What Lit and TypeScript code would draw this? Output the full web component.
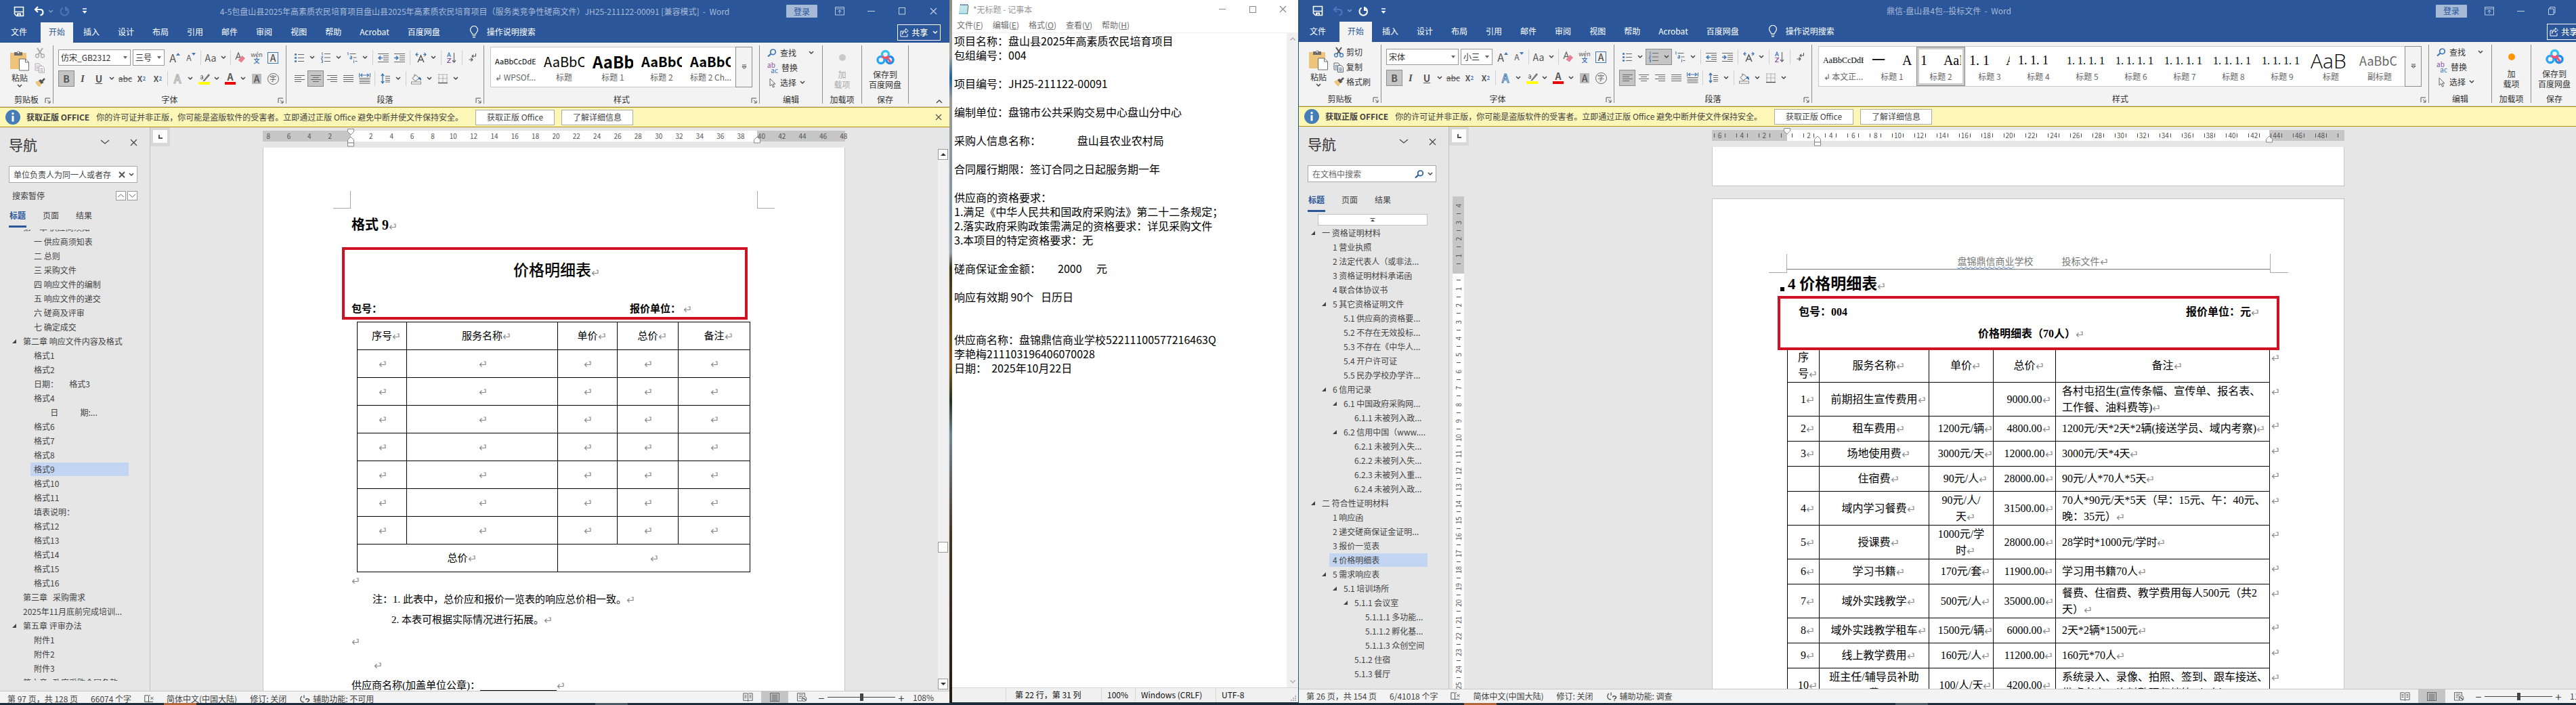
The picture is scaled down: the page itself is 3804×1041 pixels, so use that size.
import { LitElement, html, svg, css, nothing } from "lit";
import { customElement, property } from "lit/decorators.js";
import { classMap } from "lit/directives/class-map.js";

interface TreeRow { level: number; text: string; open?: boolean; active?: boolean }
interface StyleCell { sample: string; name: string; kind: string; active?: boolean }
interface WordData {
  title: string;
  maximized: boolean;
  font: string;
  size: string;
  query: string;
  rows: TreeRow[];
  styles: StyleCell[];
  status: string[];
  access: string;
  zoom: number;
  align: string;
}

const row = (level: number, text: string, open = false, active = false): TreeRow => ({ level, text, open, active });

const leftWord: WordData = {
  title: "4-5包盘山县2025年高素质农民培育项目盘山县2025年高素质农民培育项目（服务类竞争性磋商文件）JH25-211122-00091 [兼容模式]  -  Word",
  maximized: false,
  font: "仿宋_GB2312",
  size: "三号",
  query: "单位负责人为同一人或者存",
  rows: [
    row(1, "第一章 供应商须知"),
    row(2, "一 供应商须知表"), row(2, "二 总则"), row(2, "三 采购文件"), row(2, "四 响应文件的编制"),
    row(2, "五 响应文件的递交"), row(2, "六 磋商及评审"), row(2, "七 确定成交"),
    row(1, "第二章 响应文件内容及格式", true),
    row(2, "格式1"), row(2, "格式2"), row(2, "日期：      格式3"), row(2, "格式4"),
    row(2, "         日            期:..."), row(2, "格式6"), row(2, "格式7"), row(2, "格式8"),
    row(2, "格式9", false, true), row(2, "格式10"), row(2, "格式11"), row(2, "填表说明："),
    row(2, "格式12"), row(2, "格式13"), row(2, "格式14"), row(2, "格式15"), row(2, "格式16"),
    row(1, "第三章   采购需求"), row(1, "2025年11月底前完成培训..."),
    row(1, "第五章 评审办法", true), row(2, "附件1"), row(2, "附件2"), row(2, "附件3"),
    row(1, "第六章   政府采购合同条款"),
  ],
  styles: [
    { sample: "AaBbCcDdE", name: "↲ WPSOf...", kind: "s11" },
    { sample: "AaBbC", name: "标题", kind: "s20" },
    { sample: "AaBb", name: "标题 1", kind: "s24 b" },
    { sample: "AaBbC", name: "标题 2", kind: "s20 b" },
    { sample: "AaBbC", name: "标题 2 Ch...", kind: "s20 b" },
  ],
  status: ["第 97 页，共 128 页", "66074 个字"],
  access: "辅助功能: 不可用",
  zoom: 108,
  align: "center",
};

const rightWord: WordData = {
  title: "鼎信-盘山县4包--投标文件  -  Word",
  maximized: true,
  font: "宋体",
  size: "小三",
  query: "",
  rows: [
    row(1, "一 资格证明材料", true), row(2, "1 营业执照"), row(2, "2 法定代表人（或非法..."),
    row(2, "3 资格证明材料承诺函"), row(2, "4 联合体协议书"), row(2, "5 其它资格证明文件", true),
    row(3, "5.1 供应商的资格要..."), row(3, "5.2 不存在无效投标..."), row(3, "5.3 不存在《中华人..."),
    row(3, "5.4 开户许可证"), row(3, "5.5 民办学校办学许..."), row(2, "6 信用记录", true),
    row(3, "6.1 中国政府采购网...", true), row(4, "6.1.1 未被列入政..."),
    row(3, "6.2 信用中国（www....", true), row(4, "6.2.1 未被列入失..."), row(4, "6.2.2 未被列入失..."),
    row(4, "6.2.3 未被列入重..."), row(4, "6.2.4 未被列入政..."), row(1, "二 符合性证明材料", true),
    row(2, "1 响应函"), row(2, "2 递交磋商保证金证明..."), row(2, "3 报价一览表"),
    row(2, "4 价格明细表", false, true), row(2, "5 需求响应表", true), row(3, "5.1 培训场所", true),
    row(4, "5.1.1 会议室", true), row(5, "5.1.1.1 多功能..."), row(5, "5.1.1.2 孵化基..."),
    row(5, "5.1.1.3 众创空间"), row(4, "5.1.2 住宿"), row(4, "5.1.3 餐厅"),
  ],
  styles: [
    { sample: "AaBbCcDdE", name: "↲ 本文正...", kind: "song s12" },
    { sample: "一     A", name: "标题 1", kind: "song s20" },
    { sample: "1     AaI", name: "标题 2", kind: "song s20", active: true },
    { sample: "1. 1     A", name: "标题 3", kind: "song s20" },
    { sample: "1. 1. 1", name: "标题 4", kind: "song s18" },
    { sample: "1. 1. 1. 1", name: "标题 5", kind: "song s16" },
    { sample: "1. 1. 1. 1", name: "标题 6", kind: "song s16" },
    { sample: "1. 1. 1. 1", name: "标题 7", kind: "song s16" },
    { sample: "1. 1. 1. 1", name: "标题 8", kind: "song s16" },
    { sample: "1. 1. 1. 1", name: "标题 9", kind: "song s16" },
    { sample: "AaB", name: "标题", kind: "s30 thin" },
    { sample: "AaBbC", name: "副标题", kind: "s18 soft" },
  ],
  status: ["第 26 页，共 154 页", "6/41018 个字"],
  access: "辅助功能: 调查",
  zoom: 110,
  align: "left",
};

const noteText = `项目名称：盘山县2025年高素质农民培育项目
包组编号：004

项目编号：JH25-211122-00091

编制单位：盘锦市公共采购交易中心盘山分中心

采购人信息名称：               盘山县农业农村局

合同履行期限：签订合同之日起服务期一年

供应商的资格要求：
1.满足《中华人民共和国政府采购法》第二十二条规定；
2.落实政府采购政策需满足的资格要求：详见采购文件
3.本项目的特定资格要求：无

磋商保证金金额：       2000      元

响应有效期 90个   日历日


供应商名称：盘锦鼎信商业学校52211100577216463Q
李艳梅211103196406070028
日期：  2025年10月22日`;

/* ---------- icons ---------- */
const ico = (w: number, h: number, body: unknown) =>
  html`<svg class="ico" width=${w} height=${h} viewBox="0 0 ${w} ${h}" fill="none" aria-hidden="true">${body}</svg>`;
const chev = () => ico(8, 6, svg`<path d="M1 1l3 3 3-3" stroke="#444" stroke-width="1.5"/>`);
const bigChev = () => ico(14, 8, svg`<path d="M1 1l6 5 6-5" stroke="#444" stroke-width="1.2"/>`);
const cross = (color = "#444", n = 12) =>
  ico(n, n, svg`<path d="M1 1L${n - 1} ${n - 1}M${n - 1} 1L1 ${n - 1}" stroke=${color} stroke-width="1.2"/>`);
const save = () => ico(16, 16, svg`<path d="M1.5 1.5h13v13h-10l-3-3z" stroke="#fff" stroke-width="1.6"/><path d="M2 8.5h12" stroke="#fff" stroke-width="1.4"/><path d="M5 10.500h6v4H9.500v-2H7v2H5z" fill="#fff"/>`);
const undo = (c: string) => ico(16, 15, svg`<path d="M6 1L2 5l4 4M2.500 5H9c3 0 4.500 1.800 4.500 4.200S12 13 9.500 13.500" stroke=${c} stroke-width="2.200"/>`);
const redo = (c: string) => ico(15, 15, svg`<path d="M4.500 2.500C2 4 1.500 6 1.500 8a5.700 5.700 0 0 0 11.500 0c0-2.500-1.300-4.500-3.500-5.500M9 1v5h4.500" stroke=${c} stroke-width="2"/>`);
const customize = () => ico(8, 9, svg`<path d="M1 1h6" stroke="#fff" stroke-width="1.500"/><path d="M.5 4h7L4 8z" fill="#fff"/>`);
const ribbonOpt = () => ico(15, 13, svg`<rect x=".5" y=".5" width="13" height="11.500" stroke="#b8c7df"/><path d="M.5 3h13M7 10V5M4.500 7.300L7 5l2.500 2.300" stroke="#b8c7df"/>`);
const bulb = () => ico(14, 18, svg`<path d="M4.500 12.500c0-2-3-3-3-6.500a5.500 5.500 0 0 1 11 0c0 3.500-3 4.500-3 6.500zM4.500 14.500h5M5 16.800h4" stroke="#fff" stroke-width="1.200"/>`);
const share = () => ico(13, 14, svg`<path d="M4 5H1v8h10V9M3.500 10c.3-3 2-4.500 5-4.500V8L12 4.500 8.500 1v2.500C5 3.500 3.500 6.500 3.500 10z" stroke="#fff"/>`);
const paste = () => ico(30, 31, svg`<path d="M1 4h24v24H1z" fill="#eec47b"/><path d="M7 3h4a2.500 2.500 0 0 1 4.500 0H19v5H7z" fill="#6d6d6d"/><circle cx="13" cy="3.500" r="1.200" fill="#f3f3f3"/><path d="M14.500 13h9l5 5v12h-14z" fill="#fff" stroke="#6d6d6d"/><path d="M23.500 13v5h5" stroke="#6d6d6d"/>`);
const cut = (on: boolean) => { const a = on ? "#555" : "#aaa"; const b = on ? "#3f78b5" : "#aaa"; return ico(16, 16, svg`<path d="M4 1l6.500 9.500M12 1L5.500 10.500" stroke=${a} stroke-width="2"/><circle cx="4" cy="12.500" r="2.500" stroke=${b} stroke-width="1.300"/><circle cx="12" cy="12.500" r="2.500" stroke=${b} stroke-width="1.300"/>`); };
const copy = (on: boolean) => { const a = on ? "#666" : "#b1acb8"; const b = on ? "#3f78b5" : "#b1acb8"; return ico(16, 15, svg`<path d="M1 1h6l2 2v8H1z" stroke=${a}/><path d="M6.500 4.500h5l3 3v7h-8z" fill="#f3f3f3" stroke=${a}/><path d="M2.500 4.500h3M2.500 6.500h3M2.500 8.500h3M8.500 8.500h4M8.500 10.500h4M8.500 12.500h4" stroke=${b}/>`); };
const brush = () => ico(16, 14, svg`<path d="M1 6l5-2 4 5-2 4.500C5 13 3 10 1 6z" fill="#eec47b"/><path d="M6 4l3-2 4.500 5L10 9z" fill="#555"/><path d="M11 5l4-4" stroke="#555" stroke-width="2.500"/>`);
const launcher = () => ico(9, 9, svg`<path d="M1 8V1h7M4 4l4 4M8 4.500V8H4.500" stroke="#555"/>`);
const eraser = () => ico(16, 18, svg`<path d="M1 12L5 2l4 10M2.500 8.500h5" stroke="#666" stroke-width="1.300"/><path d="M4.500 13l6-7 4.500 4-5.500 6.500z" fill="#ea7e92"/>`);
const lines = (ws: number[], xs: number[] = [], c = "#666") => svg`${ws.map((w, i) => svg`<path d="M${xs[i] ?? 0} ${i * 3 + 1}.5h${w}" stroke=${c}/>`)}`;
const alignIcon = (k: string) => {
  const m: Record<string, [number[], number[]]> = {
    left: [[15, 10, 15, 10], []], center: [[15, 9, 15, 9], [0, 3, 0, 3]], right: [[15, 10, 15, 10], [0, 5, 0, 5]], justify: [[15, 15, 15, 15], []],
  };
  return ico(15, 13, lines(m[k][0], m[k][1]));
};
const distribute = () => ico(17, 17, svg`<path d="M.5 0v6M16.500 0v6M2 3h13M5 .8L2.500 3 5 5.200M12 .8L14.500 3 12 5.200" stroke="#3f78b5" stroke-width="1.200"/><path d="M.5 7.500h16M.5 10h16M.5 12.500h16M.5 15h16" stroke="#666"/>`);
const bullets = () => ico(15, 15, svg`<path d="M0 2.500h3M0 7.500h3M0 12.500h3" stroke="#3f78b5" stroke-width="2.500"/><path d="M5 2.500h9M5 7.500h9M5 12.500h9" stroke="#666"/>`);
const numbers = () => ico(15, 16, svg`<path d="M1 1.500L2 .5V5M.5 6.500h2v2h-2v2h2M.5 12h2v3.500h-2M1 13.700h1.500" stroke="#3f78b5" stroke-width=".9"/><path d="M5 2.500h9M5 8h9M5 13.500h9" stroke="#666"/>`);
const multi = () => ico(16, 16, svg`<path d="M1 1l1-.5V4.500M5 6h2.500v4H5V8h2.500M10.500 12.500V16M10.500 11v.8" stroke="#3f78b5"/><path d="M4.500 2.500h9M9.500 8h5M12.500 13.500h3" stroke="#666"/>`);
const indent = (out: boolean) => ico(16, 13, svg`<path d="M0 .5h16M8 3.500h8M8 6.500h8M8 9.500h8M0 12.500h16" stroke="#666"/>${out ? svg`<path d="M7 6.500H1.500M4 3.800L1.200 6.500 4 9.200" stroke="#3f78b5" stroke-width="1.600"/>` : svg`<path d="M0 6.500h5.500M3 3.800l2.800 2.700L3 9.200" stroke="#3f78b5" stroke-width="1.600"/>`}`);
const asian = () => ico(17, 16, svg`<path d="M4 15L8.500 5 13 15M5.500 11.500h6" stroke="#555" stroke-width="1.500"/><path d="M3.500 1L1 3.500 3.500 6M1 3.500h4M13.500 1L16 3.500 13.500 6M16 3.500h-4" stroke="#3f78b5" stroke-width="1.200"/>`);
const sort = () => ico(14, 17, svg`<path d="M.5 7L3 .8 5.500 7M1.300 5h3.400" stroke="#3f78b5" stroke-width="1.100"/><path d="M.5 9.500h5L.5 15.500h5" stroke="#8a50a8" stroke-width="1.200"/><path d="M10.500 1v13M8 12l2.500 3 2.500-3" stroke="#666" stroke-width="1.200"/>`);
const marks = () => ico(12, 14, svg`<path d="M10.500 1v4H5M7 3L5 5l2 2M.5 10h5M3.500 7.500L6 10l-2.500 2.500" stroke="#555" stroke-width="1.100"/>`);
const spacing = () => ico(14, 16, svg`<path d="M3 1v14M.8 4L3 1.200 5.200 4M.8 12L3 14.800 5.200 12" stroke="#3f78b5" stroke-width="1.400"/><path d="M7 4.500h7M7 7.500h7M7 10.500h7M7 13h7" stroke="#666"/>`);
const bucket = () => ico(18, 17, svg`<path d="M3 7.500L8 2.500l5 5-5.500 4.500zM6 4V1.500" stroke="#666"/><path d="M13 5.500c3 1 3.500 3 2.500 6-1.500-2-2-2.500-4-3z" fill="#3f78b5"/><rect x="1.500" y="13" width="14" height="3" fill="#fff" stroke="#888"/>`);
const borders = () => ico(14, 15, svg`<path d="M.5 1h13M.5 7h13M1 1v12M7 1v12M13 1v12" stroke="#777" stroke-dasharray="1 1"/><path d="M0 13.500h14" stroke="#444" stroke-width="1.300"/>`);
const pen = () => ico(17, 18, svg`<path d="M3.500 5.500c0-1.500 3-1.500 3 .3v4M6.500 7c-4-.5-4 3 -1.500 2.800.8 0 1.500-.8 1.500-1.300" stroke="#555"/><path d="M7 12L15 2l2 2-8 9H6z" fill="#777"/><rect y="14" width="17" height="4" fill="#ff0"/>`);
const find = (c = "#3f78b5") => ico(14, 12, svg`<circle cx="8.500" cy="4.800" r="3.800" stroke=${c} stroke-width="1.700"/><path d="M5.500 7.500L1 11.500" stroke=${c} stroke-width="2.200"/>`);
const dot = (c: string) => ico(14, 14, svg`<circle cx="7" cy="7" r="5" fill=${c}/>`);
const pan = () => ico(27, 23, svg`<circle cx="7" cy="15.500" r="5" stroke="#2aa5f5" stroke-width="3.400"/><circle cx="20" cy="15.500" r="5" stroke="#1d8df0" stroke-width="3.400"/><circle cx="13.500" cy="7.500" r="5" stroke="#34c2f4" stroke-width="3.400"/><path d="M8.800 9.500c1.500 4 7.500 4 9.400 0" stroke="#f4516c" stroke-width="3.400"/><path d="M16.500 12.500l5 6.500" stroke="#f4516c" stroke-width="3"/>`);
const info = () => ico(22, 22, svg`<circle cx="11" cy="11" r="11" fill="#457db8"/><rect x="9.500" y="9" width="3" height="8.500" fill="#fff"/><circle cx="11" cy="5.800" r="1.700" fill="#fff"/>`);
const book = () => ico(15, 13, svg`<path d="M7.500 1.500L6 .8H.8v10.500H6l1.500 1 1.500-1h5.200V.8H9zM7.500 1.500v10.500" stroke="#666"/><path d="M2.500 3.500h3M2.500 5.500h3M2.500 7.500h3M9.500 3.500h3M9.500 5.500h3M9.500 7.500h3" stroke="#666"/>`);
const pageIcon = () => ico(14, 13, svg`<rect x=".5" y=".5" width="13" height="12" stroke="#666"/><path d="M2.500 3h9M2.500 5h9M2.500 7h9M2.500 9h9M2.500 11h9" stroke="#666"/>`);
const web = () => ico(15, 13, svg`<path d="M8 12H.5V.5h11V5M2.500 3h7M2.500 5.500h5M2.500 8h3" stroke="#666"/><circle cx="10.500" cy="9" r="3.500" stroke="#666"/><path d="M8 8l3 1 2 2.500" stroke="#666" stroke-width="1.500"/>`);
const proof = () => ico(15, 12, svg`<path d="M6.500 1.500L5.500.8H.8v9.500h4.700l1 .7zM6.500 1.500l1-.7H9M7 11l1-.7h5M9.500 3l4 4M13.500 3l-4 4" stroke="#555"/>`);
const access = () => ico(17, 14, svg`<path d="M7 1.500V6M4 3C1.500 5 1 8 3 10.500c1 1 2.500 1.500 4 1" stroke="#555" stroke-width="1.300"/><path d="M9.500 8.500c.5-2.500 5.500-2 5 .5-.3 1.500-2.500 1.200-2.500 3M12 13v1" stroke="#444" stroke-width="1.500"/>`);
const lineMark = () => html`<svg class="pm" width="11" height="9" viewBox="0 0 11 9" fill="none" aria-hidden="true"><path d="M7.500 1H10v4.500H1.500M4.500 2.500l-3 3 3 3" stroke="#888" stroke-width="1.200"/></svg>`;

/* ---------- shared look ---------- */
const base = css`
  * { box-sizing: border-box; }
  button, input, select, textarea { font: inherit; color: inherit; border: 0; padding: 0; margin: 0; background: none; border-radius: 0; outline: 0; }
  button { display: inline-flex; align-items: center; justify-content: center; white-space: pre; }
  a { color: inherit; text-decoration: none; }
  .ico { display: block; flex: none; }
`;

@customElement("word-window")
export class WordWindow extends LitElement {
  @property({ attribute: false }) data!: WordData;

  static styles = [base, css`
    :host { display: flex; flex-direction: column; min-width: 0; min-height: 0; overflow: hidden; background: #e6e6e6;
      font: 12px/16px "Noto Sans CJK SC", "Noto Sans", sans-serif; color: #444; --title: 33px; --status: 18px; --status-pad: 4px; --edge: 20px; }
    :host([maximized]) { --title: 32px; --status: 21px; --status-pad: 0px; --edge: 9px; }
    .title { display: grid; grid-template-columns: 1fr auto 1fr; flex: none; height: var(--title); background: #2b579a; color: #a9bad6; align-items: center; white-space: pre; }
    .qat { display: flex; align-items: center; padding-left: 20px; }
    .qat button { height: 24px; }
    .qat .save { width: 16px; margin-right: 13px; }
    .qat .un { width: 31px; gap: 5px; margin-right: 8px; }
    .qat .re { width: 15px; margin-right: 18px; }
    .ctl { display: flex; justify-content: flex-end; padding-right: 1px; align-items: center; }
    .ctl button { width: 46px; height: 30px; }
    .ctl .login { background: #a6b9d6; color: #2b579a; height: 19px; margin-right: 10px; border-radius: 1px; }
    .tabs { display: flex; flex: none; height: 30px; background: #2b579a; color: #fff; align-items: center; }
    .tabs nav { display: flex; gap: 3px; height: 100%; }
    .tabs a { display: flex; align-items: center; padding: 0 12px 2px; white-space: nowrap; }
    .tabs .file { padding: 0 17px 2px 16px; }
    .tabs .on { background: #f3f3f3; color: #2b579a; }
    .tabs .tell { gap: 12px; margin-left: 16px; }
    .share { margin-left: auto; margin-right: 13px; width: 64px; height: 24px; border: 1px solid #fff; gap: 4px; font-weight: 500; }
    .ribbon { display: flex; flex: none; height: 95px; background: #f3f3f3; border-bottom: 1px solid #d0d0d0; padding-top: 4px; }
    .group { display: flex; flex-direction: column; justify-content: space-between; position: relative; height: 86px; border-right: 1px solid #8c8c8c; flex: none; color: #333; }
    .group > h3 { margin: 0; font-size: 12px; font-weight: 400; line-height: 12px; text-align: center; color: #333; }
    .launch { position: absolute; right: 3px; bottom: 0; width: 9px; height: 9px; }
    .clip { width: 79px; }
    :host([maximized]) .clip { width: 122px; }
    .clip .body { display: flex; padding-left: 14px; gap: 7px; }
    .pastebtn { display: flex; flex-direction: column; width: 30px; line-height: 15px; padding-top: 3px; gap: 2px; }
    .mini { display: flex; flex-direction: column; }
    .mini button { height: 22px; gap: 3px; justify-content: flex-start; }
    .font { width: 344px; }
    .para { width: 292px; }
    .rows { display: flex; flex-direction: column; gap: 7px; padding: 6px 0 0 7px; }
    .r { display: flex; height: 24px; align-items: center; }
    .r > button { width: 24px; height: 24px; color: #555; }
    .r > .split { width: 39px; justify-content: flex-start; gap: 3px; }
    .split > .face { display: flex; justify-content: center; align-items: center; width: 24px; }
    .sel { background: #c5c5c5; box-shadow: inset 0 0 0 1px #8a8a8a; }
    .sep { width: 1px; height: 22px; background: #d0d0d0; margin: 0 2px; flex: none; }
    .para .sep { margin: 0 3px; }
    .combo { display: flex; align-items: center; height: 24px; border: 1px solid #999; background: #fff; padding: 0 4px 0 3px; margin-right: 3px; color: #333; }
    .combo select { appearance: none; flex: 1; min-width: 0; font-size: 12px; height: 20px; }
    .c1 { width: 107px; }
    .c2 { width: 47px; }
    .g16 { font-size: 16px; }
    .b { font-weight: 700; }
    .i { font-style: italic; font-family: "Liberation Serif", serif; font-weight: 700; font-size: 15px; }
    .u { text-decoration: underline; font-weight: 700; font-size: 14px; }
    .s { text-decoration: line-through; }
    sup, sub { font-size: 8px; line-height: 0; color: #3f78b5; font-weight: 700; }
    .box { display: flex; align-items: center; justify-content: center; width: 16px; height: 17px; border: 1px solid #3f78b5; font-weight: 500; font-size: 14px; line-height: 14px; }
    .shade { display: flex; align-items: center; justify-content: center; width: 14px; height: 15px; background: #bbb; font-weight: 500; font-size: 14px; }
    .ring { display: flex; align-items: center; justify-content: center; width: 17px; height: 17px; border: 1px solid #666; border-radius: 50%; font-size: 10px; }
    .wen { display: flex; flex-direction: column; font-size: 9px; line-height: 9px; align-items: center; }
    .wen em { color: #3f78b5; font-style: normal; font-weight: 700; }
    .glow { color: #f3f3f3; -webkit-text-stroke: 1px #aaa; font-size: 17px; font-weight: 500; }
    :host([maximized]) .glow { -webkit-text-stroke-color: #3f78b5; }
    .red { display: flex; flex-direction: column; align-items: center; line-height: 12px; font-size: 14px; font-weight: 700; border-bottom: 4px solid #e00; width: 16px; height: 18px; }
    .styles { flex: 0 0 407px; }
    :host([maximized]) .styles { flex: 0 0 911px; }
    .gallery { display: flex; margin: 2px 10px 0 9px; height: 60px; border: 1px solid #c8c8c8; background: #fff; }
    .cell { display: flex; flex-direction: column; align-items: stretch; width: 72px; height: 58px; padding: 0 6px; overflow: hidden; flex: none; text-align: center; color: #555; justify-content: flex-start; }
    .cell.act { box-shadow: inset 0 0 0 1px #8a8a8a, inset 0 0 0 4px #cdcdc9; }
    .cell .sample { display: block; height: 37px; line-height: 41px; overflow: hidden; color: #000; text-align: left; white-space: pre; }
    .cell .label { display: block; line-height: 14px; color: #666; white-space: pre; }
    .s11 { font-size: 11px; } .s12 { font-size: 12px; } .s14 { font-size: 14px; } .s16 { font-size: 16px; } .s18 { font-size: 18px; } .s20 { font-size: 20px; } .s24 { font-size: 24px; } .s30 { font-size: 30px; }
    .thin { font-family: "Open Sans", "Noto Sans CJK SC", sans-serif; font-weight: 300; }
    .cell .soft { color: #666; }
    .song { font-family: "Liberation Serif", "Noto Sans CJK SC", serif; }
    .more { width: 25px; border: 1px solid #8a8a8a; background: #f3f3f3; margin: -1px -1px -1px auto; }
    .edit { width: 93px; }
    .edit .mini { padding-left: 11px; }
    .edit .mini button { gap: 5px; }
    .edit .mini .chv { margin-left: 13px; }
    .swap { display: flex; flex-direction: column; font-size: 10px; line-height: 8px; width: 16px; height: 17px; color: #8a50a8; text-align: left; }
    .swap em { font-style: normal; color: #3f78b5; text-align: right; }
    .add { width: 58px; }
    .bd { width: 69px; }
    .big { flex-direction: column; line-height: 15px; align-items: center; }
    .big .pic { display: flex; height: 35px; align-items: center; }
    :host(:not([maximized])) .add .big { color: #aaa; }
    .fold { margin-left: auto; align-self: flex-end; width: 30px; height: 16px; }
    .msg { display: flex; flex: none; height: 30px; align-items: center; background: #fcf7b6; border: solid #b98f12; border-width: 1px 0; padding: 0 11px 0 8px; color: #444; white-space: nowrap; }
    .msg strong { margin: 0 10px 0 9px; }
    .msg .act { height: 23px; border: 1px solid #ababab; background: #fff; padding: 0 16px; margin-right: 10px; }
    .msg .first { margin-left: 18px; }
    .msg .x { margin-left: auto; }
    .main { display: flex; flex: 1; min-height: 0; }
    .pane { display: flex; flex-direction: column; width: 222px; flex: none; border-right: 1px solid #c0c0c0; padding: 0 18px 15px 13px; }
    .pane header { display: flex; align-items: center; height: 50px; margin-bottom: 7px; }
    .pane h2 { margin: 0; font-size: 21px; line-height: 24px; font-weight: 400; color: #333; flex: 1; }
    .pane header button { width: 42px; height: 20px; margin-bottom: 6px; }
    .pane header button:last-child { width: 12px; margin-left: 15px; }
    .search { display: flex; align-items: center; flex: none; height: 25px; background: #fff; border: 1px solid #ababab; padding: 0 4px 0 6px; gap: 5px; }
    .search input { flex: 1; min-width: 0; height: 20px; }
    .search input::placeholder { color: #666; opacity: 1; }
    .hits { display: flex; align-items: center; flex: none; height: 20px; margin-top: 9px; padding-left: 5px; gap: 2px; }
    .hits span { flex: 1; }
    .hits button { width: 15px; height: 14px; background: #fff; border: 1px solid #999; }
    .ptabs { display: flex; gap: 23px; flex: none; height: 30px; margin-top: 7px; }
    :host([maximized]) .ptabs { margin-top: 14px; }
    .ptabs a { padding: 4px 1px 0; }
    .ptabs .on { color: #2b579a; font-weight: 700; border-bottom: 3px solid #2b579a; }
    .top { height: 17px; margin: 3px 13px 0 15px; border: 1px solid #c0c0c0; background: #fff; flex: none; }
    .tree { flex: 1; min-height: 0; overflow: hidden; margin-top: 3px; }
    :host([maximized]) .tree { margin-top: 0; }
    .tree ul { list-style: none; margin: -14px 0 0; padding: 0; }
    :host([maximized]) .tree ul { margin-top: 0; }
    .tree li { display: flex; height: 21px; align-items: center; }
    .l2 { padding-left: 16px; } .l3 { padding-left: 32px; } .l4 { padding-left: 48px; } .l5 { padding-left: 64px; }
    .caret { display: flex; width: 16px; justify-content: center; flex: none; }
    .tree a { flex: 1; padding-left: 5px; line-height: 20px; white-space: pre; }
    .tree .act { background: #c2d5f2; margin-right: 13px; }
    .side { display: flex; flex-direction: column; width: 29px; flex: none; }
    .corner { height: 28px; background: #d8d8d8; padding: 4px; flex: none; }
    .corner button { display: flex; width: 21px; height: 19px; background: #fcfcfc; }
    .doc { flex: 1; min-width: 0; overflow: hidden; }
    .scroll { display: flex; flex-direction: column; width: 15px; margin: 32px 2px 2px 0; background: #f0f0f0; flex: none; }
    .scroll button { height: 16px; background: #fff; border: 1px solid #999; }
    .gap1 { flex: 565; } .gap2 { flex: 186; }
    .status { display: flex; flex: none; height: var(--status); padding: var(--status-pad) var(--edge) 0 11px; border-top: 1px solid #c8c8c8; background: #f3f3f3; align-items: center; white-space: nowrap; }
    .status .a { margin-right: 19px; }
    .status .lang { margin: 0 19px 0 18px; }
    .status .acc { margin-left: 3px; }
    .right { display: flex; margin-left: auto; align-items: center; align-self: stretch; margin-top: calc(0px - var(--status-pad)); }
    .right .v { width: 40px; align-self: stretch; }
    .right .v.on { background: #c5c5c5; }
    .sign { width: 18px; font-size: 16px; line-height: 16px; }
    input[type="range"] { appearance: none; width: 100px; height: 13px; margin: 0; background: linear-gradient(#444, #444) center / 100% 1px no-repeat; }
    input[type="range"]::-webkit-slider-thumb { appearance: none; width: 5px; height: 11px; background: #444; border: 0; border-radius: 0; }
    .pct { width: 34px; margin-left: 8px; }
  `];

  private splitBtn(label: string, face: unknown, sel = false) {
    return html`<button class=${classMap({ split: true, sel })} aria-label=${label}><span class="face">${face}</span>${chev()}</button>`;
  }

  private ribbon(d: WordData) {
    const max = d.maximized;
    return html`<section class="ribbon">
      <div class="group clip">
        <div class="body">
          <button class="pastebtn">${paste()}<span>粘贴</span>${chev()}</button>
          <div class="mini">
            <button aria-label="剪切">${cut(max)}${max ? "剪切" : nothing}</button>
            <button aria-label="复制">${copy(max)}${max ? "复制" : nothing}</button>
            <button aria-label="格式刷">${brush()}${max ? "格式刷" : nothing}</button>
          </div>
        </div>
        <h3>剪贴板</h3><button class="launch" aria-label="剪贴板选项">${launcher()}</button>
      </div>
      <div class="group font">
        <div class="rows">
          <div class="r">
            <label class="combo c1"><select aria-label="字体"><option>${d.font}</option></select>${ico(6, 4, svg`<path d="M0 0h6L3 4z" fill="#666"/>`)}</label>
            <label class="combo c2"><select aria-label="字号"><option>${d.size}</option></select>${ico(6, 4, svg`<path d="M0 0h6L3 4z" fill="#666"/>`)}</label>
            <button class="g16" aria-label="增大字号">A${ico(6, 14, svg`<path d="M0 4l3-4 3 4z" fill="#3f78b5"/>`)}</button>
            <button aria-label="减小字号">A${ico(6, 14, svg`<path d="M0 0h6L3 4z" fill="#3f78b5"/>`)}</button>
            <i class="sep"></i>
            ${this.splitBtn("更改大小写", html`<span class="s14">Aa</span>`)}
            <i class="sep"></i>
            <button aria-label="清除格式">${eraser()}</button>
            <button aria-label="拼音指南"><span class="wen">wén<em>文</em></span></button>
            <button aria-label="字符边框"><span class="box">A</span></button>
          </div>
          <div class="r">
            <button class="sel b s14" aria-label="加粗">B</button>
            <button class="i" aria-label="倾斜">I</button>
            ${this.splitBtn("下划线", html`<span class="u">U</span>`)}
            <button class="s" aria-label="删除线">abc</button>
            <button class="b" aria-label="下标">X<sub>2</sub></button>
            <button class="b" aria-label="上标">X<sup>2</sup></button>
            <i class="sep"></i>
            ${this.splitBtn("文本效果", html`<span class="glow">A</span>`)}
            ${this.splitBtn("突出显示", pen())}
            ${this.splitBtn("字体颜色", html`<span class="red">A</span>`)}
            <button aria-label="字符底纹"><span class="shade">A</span></button>
            <button aria-label="带圈字符"><span class="ring">字</span></button>
          </div>
        </div>
        <h3>字体</h3><button class="launch" aria-label="字体选项">${launcher()}</button>
      </div>
      <div class="group para">
        <div class="rows">
          <div class="r">
            ${this.splitBtn("项目符号", bullets())}${this.splitBtn("编号", numbers(), max)}${this.splitBtn("多级列表", multi())}
            <i class="sep"></i>
            <button aria-label="减少缩进">${indent(true)}</button><button aria-label="增加缩进">${indent(false)}</button>
            <i class="sep"></i>${this.splitBtn("中文版式", asian())}<i class="sep"></i>
            <button aria-label="排序">${sort()}</button><i class="sep"></i>
            <button aria-label="编辑标记">${marks()}</button>
          </div>
          <div class="r">
            ${["left", "center", "right", "justify"].map((k) => html`<button class=${classMap({ sel: k === d.align })} aria-label=${k}>${alignIcon(k)}</button>`)}
            <button aria-label="分散对齐">${distribute()}</button>
            <i class="sep"></i>${this.splitBtn("行距", spacing())}<i class="sep"></i>
            ${this.splitBtn("底纹", bucket())}${this.splitBtn("边框", borders())}
          </div>
        </div>
        <h3>段落</h3><button class="launch" aria-label="段落选项">${launcher()}</button>
      </div>
      <div class="group styles">
        <div class="gallery">
          ${d.styles.map((s) => html`<button class=${classMap({ cell: true, act: !!s.active })}><span class="sample ${s.kind}">${s.sample}</span><span class="label">${s.name}</span></button>`)}
          <button class="more" aria-label="其他样式">${ico(8, 8, svg`<path d="M1 1h6M1 3.500l3 3 3-3z" stroke="#444"/>`)}</button>
        </div>
        <h3>样式</h3><button class="launch" aria-label="样式选项">${launcher()}</button>
      </div>
      <div class="group edit">
        <div class="mini">
          <button>${find()}查找<span class="chv">${chev()}</span></button>
          <button><span class="swap">ab<em>ac</em></span>替换</button>
          <button>${ico(14, 15, svg`<path d="M4 1v11l2.700-2.500L8.500 14l2-.8-2-4.200H12z" stroke="#666"/>`)}选择${chev()}</button>
        </div>
        <h3>编辑</h3>
      </div>
      <div class="group add">
        <button class="big"><span class="pic">${dot(max ? "#ff9500" : "#c9c9c9")}</span><span>加</span><span>载项</span></button>
        <h3>加载项</h3>
      </div>
      <div class="group bd">
        <button class="big"><span class="pic">${pan()}</span><span>保存到</span><span>百度网盘</span></button>
        <h3>保存</h3>
      </div>
      <button class="fold" aria-label="折叠功能区">${ico(10, 7, svg`<path d="M1 6l4-4 4 4" stroke="#444" stroke-width="1.300"/>`)}</button>
    </section>`;
  }

  private pane(d: WordData) {
    return html`<aside class="pane">
      <header><h2>导航</h2><button aria-label="窗格选项">${bigChev()}</button><button aria-label="关闭">${cross("#444", 11)}</button></header>
      <label class="search">
        ${d.maximized
          ? html`<input type="text" placeholder="在文档中搜索" aria-label="在文档中搜索" />${find("#2b579a")}${chev()}`
          : html`<input type="text" .value=${d.query} aria-label="搜索文档" />${ico(10, 10, svg`<path d="M1 1l8 8M9 1L1 9" stroke="#555" stroke-width="2"/>`)}${chev()}`}
      </label>
      ${d.maximized ? nothing : html`<div class="hits"><span>搜索暂停</span>
        <button aria-label="上一个">${ico(11, 6, svg`<path d="M1 5l4.500-4L10 5" stroke="#666"/>`)}</button>
        <button aria-label="下一个">${ico(11, 6, svg`<path d="M1 1l4.500 4L10 1" stroke="#666"/>`)}</button></div>`}
      <nav class="ptabs"><a class="on" href="#headings">标题</a><a href="#pages">页面</a><a href="#results">结果</a></nav>
      ${d.maximized ? html`<button class="top" aria-label="跳到开头">${ico(8, 6, svg`<path d="M.5.5h7" stroke="#444"/><path d="M4 2l3 3H1z" fill="#444"/>`)}</button>` : nothing}
      <div class="tree"><ul>
        ${d.rows.map((r) => html`<li class="l${r.level}">
          <span class="caret">${r.open ? ico(6, 6, svg`<path d="M6 0v6H0z" fill="#444"/>`) : nothing}</span><a class=${classMap({ act: !!r.active })} href="#heading">${r.text}</a></li>`)}
      </ul></div>
    </aside>`;
  }

  render() {
    const d = this.data;
    const faded = "#4a76b8";
    return html`
      <header class="title">
        <div class="qat">
          <button class="save" aria-label="保存">${save()}</button>
          <button class="un" aria-label="撤消">${undo(d.maximized ? faded : "#fff")}${ico(8, 6, svg`<path d="M1 1l3 3 3-3" stroke="#7d9bc8" stroke-width="1.500"/>`)}</button>
          <button class="re" aria-label="恢复">${redo(d.maximized ? "#fff" : faded)}</button>
          <button aria-label="自定义">${customize()}</button>
        </div>
        <div>${d.title}</div>
        <div class="ctl">
          <button class="login">登录</button>
          <button aria-label="功能区显示选项">${ribbonOpt()}</button>
          <button aria-label="最小化">${ico(11, 1, svg`<path d="M0 .5h11" stroke="#c4d0e4"/>`)}</button>
          <button aria-label="最大化">${d.maximized
            ? ico(11, 12, svg`<path d="M.5 3h7.500v8.500H.5zM2.500 3V.5H10v8.500H8" stroke="#c4d0e4"/>`)
            : ico(10, 11, svg`<rect x=".5" y=".5" width="9" height="9.500" stroke="#c4d0e4"/>`)}</button>
          <button aria-label="关闭">${cross("#c4d0e4", 11)}</button>
        </div>
      </header>
      <div class="tabs">
        <nav>
          <a class="file" href="#file">文件</a><a class="on" href="#home">开始</a>
          ${["插入", "设计", "布局", "引用", "邮件", "审阅", "视图", "帮助", "Acrobat", "百度网盘"].map((t) => html`<a href="#tab">${t}</a>`)}
          <a class="tell" href="#tell">${bulb()}操作说明搜索</a>
        </nav>
        <button class="share">${share()}共享 ${ico(8, 6, svg`<path d="M1 1l3 3 3-3" stroke="#fff" stroke-width="1.500"/>`)}</button>
      </div>
      ${this.ribbon(d)}
      <div class="msg">${info()}<strong>获取正版 OFFICE</strong><span>你的许可证并非正版，你可能是盗版软件的受害者。立即通过正版 Office 避免中断并使文件保持安全。</span>
        <button class="act first">获取正版 Office</button><button class="act">了解详细信息</button>
        <button class="x" aria-label="关闭消息">${cross("#555", 10)}</button></div>
      <div class="main">
        ${this.pane(d)}
        <div class="side"><div class="corner"><button aria-label="制表符">${ico(6, 6, svg`<path d="M1 0v5h5" stroke="#555" stroke-width="2"/>`)}</button></div><slot name="vruler"></slot></div>
        <div class="doc"><slot></slot></div>
        <div class="scroll">
          <button aria-label="向上">${ico(8, 4, svg`<path d="M0 4l4-4 4 4z" fill="#333"/>`)}</button><span class="gap1"></span>
          <button aria-label="滚动块"></button><span class="gap2"></span>
          <button aria-label="向下">${ico(8, 4, svg`<path d="M0 0h8L4 4z" fill="#333"/>`)}</button>
        </div>
      </div>
      <footer class="status">
        ${d.status.map((s) => html`<span class="a">${s}</span>`)}
        ${proof()}<span class="lang">简体中文(中国大陆)</span><span class="a">修订: 关闭</span>${access()}<span class="acc">${d.access}</span>
        <div class="right">
          <button class="v" aria-label="阅读视图">${book()}</button><button class="v on" aria-label="页面视图">${pageIcon()}</button><button class="v" aria-label="Web 版式">${web()}</button>
          <button class="sign" aria-label="缩小">−</button>
          <input type="range" min="10" max="206" .value=${String(d.zoom)} aria-label="缩放" />
          <button class="sign" aria-label="放大">+</button><span class="pct">${d.zoom}%</span>
        </div>
      </footer>`;
  }
}

@customElement("note-pad")
export class NotePad extends LitElement {
  static styles = [base, css`
    :host { display: flex; flex-direction: column; background: #fff; margin-bottom: 1px; min-width: 0; font: 12px/16px "Noto Sans CJK SC", sans-serif; }
    .bar { display: flex; align-items: center; height: 27px; padding-left: 9px; gap: 6px; color: #999; white-space: pre; }
    .bar span { flex: 1; }
    .bar div { display: flex; }
    .bar button { width: 45px; height: 26px; }
    .menu { display: flex; height: 22px; align-items: center; gap: 14px; padding-left: 7px; color: #6d6d6d; border-bottom: 1px solid #eee; padding-bottom: 1px; }
    .area { display: flex; flex: 1; min-height: 0; }
    textarea { flex: 1; resize: none; overflow: hidden; font-size: 16px; line-height: 21px; padding: 1px 0 0 3px; color: #000; white-space: pre; display: block; }
    .sb { display: flex; flex-direction: column; justify-content: space-between; align-items: center; width: 17px; background: #f0f0f0; }
    .sb button { height: 17px; width: 17px; }
    .foot { display: grid; grid-template-columns: 79fr 141px 50px 119px 122px; height: 22px; background: #f0f0f0; border-top: 1px solid #d7d7d7; color: #111; }
    .foot span { border-left: 1px solid #d7d7d7; padding: 2px 0 0 8px; white-space: nowrap; margin-bottom: 2px; }
    .foot span:first-child { border: 0; }
    .foot .pos { padding-left: 13px; }
    .foot .enc { display: flex; justify-content: space-between; padding-right: 2px; margin-bottom: 0; }
    .foot .enc .ico { align-self: flex-end; }
  `];

  render() {
    return html`
      <div class="bar">
        ${ico(16, 17, svg`<path d="M3 2h12l-1.500 14H1z" fill="#7ec4d6"/><path d="M3 3h11l-1 11H2z" fill="#bfe6ee"/><path d="M3 2h12" stroke="#557" stroke-dasharray="1 1" stroke-width="2"/><path d="M13.500 16L15 3" stroke="#7a6a50"/>`)}
        <span>*无标题 - 记事本</span>
        <div>
          <button aria-label="最小化">${ico(10, 1, svg`<path d="M0 .5h10" stroke="#888"/>`)}</button>
          <button aria-label="最大化">${ico(10, 10, svg`<rect x=".5" y=".5" width="9" height="9" stroke="#888"/>`)}</button>
          <button aria-label="关闭">${cross("#888", 11)}</button>
        </div>
      </div>
      <nav class="menu">${[["文件", "F"], ["编辑", "E"], ["格式", "O"], ["查看", "V"], ["帮助", "H"]].map(([t, k]) => html`<button>${t}(<u>${k}</u>)</button>`)}</nav>
      <div class="area">
        <textarea aria-label="记事本正文" spellcheck="false" .value=${noteText}></textarea>
        <div class="sb">
          <button aria-label="向上">${ico(8, 5, svg`<path d="M.5 4.500l3.500-3.500 3.500 3.500" stroke="#b5b5b5" stroke-width="1.600"/>`)}</button>
          <button aria-label="向下">${ico(8, 5, svg`<path d="M.5.5L4 4 7.500.5" stroke="#b5b5b5" stroke-width="1.600"/>`)}</button>
        </div>
      </div>
      <footer class="foot"><span></span><span class="pos">第 22 行，第 31 列</span><span>100%</span><span>Windows (CRLF)</span>
        <span class="enc">UTF-8 ${ico(10, 10, svg`<path d="M7 1h2M4 4h2M7 4h2M1 7h2M4 7h2M7 7h2" stroke="#b5b5b5" stroke-width="2"/>`)}</span></footer>`;
  }
}

const mark = (after = false) => html`<span class=${after ? "after" : "solo"}>${lineMark()}</span>`;

const rulerLabels = (back: number, to: number, last: number) => {
  const out: string[] = [];
  for (let i = -back; i <= to; i += 2) out.push(i === 0 || i > last ? "" : String(Math.abs(i)));
  return out;
};

interface PriceRow { no: string; name: string[]; unit: string[]; total: string; note: string[] }
const prices: PriceRow[] = [
  { no: "1", name: ["前期招生宣传费用"], unit: [], total: "9000.00", note: ["各村屯招生(宣传条幅、宣传单、报名表、", "工作餐、油料费等)"] },
  { no: "2", name: ["租车费用"], unit: ["1200元/辆"], total: "4800.00", note: ["1200元/天*2天*2辆(接送学员、域内考察)"] },
  { no: "3", name: ["场地使用费"], unit: ["3000元/天"], total: "12000.00", note: ["3000元/天*4天"] },
  { no: "", name: ["住宿费"], unit: ["90元/人"], total: "28000.00", note: ["90元/人*70人*5天"] },
  { no: "4", name: ["域内学习餐费"], unit: ["90元/人/", "天"], total: "31500.00", note: ["70人*90元/天*5天（早：15元、午：40元、", "晚：35元）"] },
  { no: "5", name: ["授课费"], unit: ["1000元/学", "时"], total: "28000.00", note: ["28学时*1000元/学时"] },
  { no: "6", name: ["学习书籍"], unit: ["170元/套"], total: "11900.00", note: ["学习用书籍70人"] },
  { no: "7", name: ["域外实践教学"], unit: ["500元/人"], total: "35000.00", note: ["餐费、住宿费、教学费用每人500元（共2", "天）"] },
  { no: "8", name: ["域外实践教学租车"], unit: ["1500元/辆"], total: "6000.00", note: ["2天*2辆*1500元"] },
  { no: "9", name: ["线上教学费用"], unit: ["160元/人"], total: "11200.00", note: ["160元*70人"] },
  { no: "10", name: ["班主任/辅导员补助", "费"], unit: ["100/人/天"], total: "4200.00", note: ["系统录入、录像、拍照、签到、跟车接送、", "带班考察、资料整理归档等（7人）"] },
];

@customElement("app-root")
export class AppRoot extends LitElement {
  static styles = [base, css`
    :host { display: grid; grid-template: minmax(0, 1fr) 3px / 1402fr 4px 511fr 1887fr; height: 100vh; overflow: hidden; background: #1d2c3b; }
    .wall { background: linear-gradient(#8f8a80, #a5a8a0 8%, #1f64a0 11%, #9a9a94 14%, #7e96aa 30%, #94a3ac 36%, #3c3412 38%, #8a5a20 52%, #24351f 57%, #6f8798 62%, #4a3320 76%, #241d14); }
    .last { min-width: 0; overflow: hidden; border-left: 1px solid #1f5573; display: flex; }
    .last word-window { flex: 0 0 calc(100% + 34px); }
    .task { grid-column: 1 / -1; background:
      linear-gradient(#b0683a, #b0683a) 242px 0 / 48px 3px no-repeat, linear-gradient(#4b5964, #4b5964) 879px 0 / 48px 3px no-repeat,
      linear-gradient(#b0683a, #b0683a) 2162px 0 / 48px 3px no-repeat, linear-gradient(#4b5964, #4b5964) 2799px 0 / 48px 3px no-repeat, #1d2c3b; }
    .canvas { display: flex; flex-direction: column; align-items: center; padding-top: 5px; font: 15px/24px "Liberation Serif", "Noto Sans CJK SC", serif; color: #000; }
    .ruler { position: relative; height: 16px; margin-bottom: 9px; font: 10px/16px "Noto Sans CJK SC", sans-serif; color: #555; flex: none; }
    .ticks { display: flex; height: 16px; }
    .ticks > div { display: flex; flex: none; }
    .ticks span { flex: 1; text-align: center; }
    .one { width: 860px; }
    .one .ticks { background: linear-gradient(90deg, #c6c6c6 130px, #fff 130px, #fff 730px, #c6c6c6 730px); }
    .one .ticks > div { width: 880px; margin-left: -7px; }
    .two { width: 934px; }
    .two .ticks { overflow: hidden; background: linear-gradient(90deg, #c6c6c6 111px, #fff 111px, #fff 823px, #c6c6c6 823px); }
    .two .ticks > div { width: 954px; margin-left: -5px; }
    .two .ticks span { display: flex; justify-content: space-between; align-items: center; padding: 0 8px; }
    .two .ticks span::before, .two .ticks span::after { content: ""; width: 1px; height: 6px; background: #555; }
    .pin { position: absolute; }
    .one .p0 { left: 125px; top: -3px; } .one .p2 { left: 725px; top: 8px; }
    .two .p0 { left: 106px; top: -3px; } .two .p1 { left: 151px; top: 8px; } .two .p2 { left: 818px; top: 8px; }
    .pin svg { display: block; }
    .vruler { flex: 1; min-height: 0; overflow: hidden; width: 17px; margin: 75px 0 0 5px; background: linear-gradient(#c6c6c6 114px, #fff 114px); font: 10px/16px "Noto Sans CJK SC", sans-serif; color: #555; padding-top: 2px; }
    .vcell { display: flex; height: 733px; flex-direction: column; }
    .vcell span { display: flex; flex: 1; align-items: center; justify-content: center; background: linear-gradient(#555, #555) center bottom / 6px 1px no-repeat; }
    .vcell b { font-weight: 400; writing-mode: vertical-rl; transform: rotate(180deg); }
    .page { background: #fff; border: 1px solid #c6c6c6; border-bottom: 0; flex: none; }
    .pm { display: inline-block; vertical-align: 0; }
    .after { margin-right: -11px; white-space: nowrap; }
    .solo { display: inline-block; }
    .marks { display: grid; }
    .ml { border: solid #aaa; border-width: 0 1px 1px 0; }
    .mr { border: solid #aaa; border-width: 0 0 1px 1px; }
    .frame { border: 4px solid #d01124; background: #fff; position: relative; }
    h1, h2, p { margin: 0; font-weight: 700; }
    p { font-weight: 400; white-space: pre; }
    table { border-collapse: collapse; table-layout: fixed; }
    th, td { border: 1px solid #000; padding: 0; font-weight: 400; text-align: center; white-space: nowrap; }

    .first { width: 860px; border-top: 0; padding-top: 64px; height: 900px; }
    .first .marks { grid-template-columns: 26px 600px 26px; height: 26px; padding-left: 103px; }
    .first h1 { font-size: 20px; line-height: 48px; margin: 0 0 9px 130px; }
    .first .frame { width: 599px; height: 107px; margin-left: 116px; }
    .first h2 { font-size: 23px; font-weight: 500; line-height: 62px; text-align: center; margin-left: 22px; }
    .first .pair { display: grid; grid-template-columns: 411px auto; padding: 14px 0 0 10px; line-height: 22px; font-weight: 700; }
    .first table { width: 580px; margin: 3px 0 0 138px; }
    .first tr { height: 41px; }
    .notes { padding-left: 130px; line-height: 30px; }
    .notes .n0 { line-height: 25px; } .notes .n1 { padding-left: 31px; } .notes .n2 { padding-left: 59px; } .notes .n3 { line-height: 35px; } .notes .n4 { line-height: 35px; padding-left: 33px; } .notes .n5 { line-height: 25px; }
    .blank { display: inline-block; width: 113px; border-bottom: 1px solid #000; height: 14px; vertical-align: -3px; }
    .w1 { width: 73px; } .w2 { width: 223px; } .w3 { width: 88px; } .w4 { width: 90px; } .w5 { width: 106px; }

    .prev { width: 934px; height: 58px; border: solid #c6c6c6; border-width: 0 1px 1px; margin-bottom: 18px; }
    .second { width: 934px; height: 900px; padding-top: 81px; font-size: 16px; }
    .second .marks { grid-template-columns: 27px 713px 27px; height: 28px; padding-left: 83px; }
    .head { display: flex; justify-content: center; gap: 42px; font-size: 14px; line-height: 24px; height: 23px; border-bottom: 1px solid #777; color: #777; }
    .wavy { text-decoration: underline wavy #3a6ee8 1px; text-underline-offset: 2px; }
    .second h1 { display: flex; align-items: center; gap: 5px; font-size: 23px; line-height: 34px; height: 34px; margin-left: 100px; }
    .sq { width: 6px; height: 6px; background: #000; margin-top: 14px; }
    .second .frame { width: 741px; height: 80px; margin-left: 96px; font-weight: 700; z-index: 1; }
    .second .pair { display: flex; justify-content: space-between; padding: 8px 38px 0 27px; line-height: 24px; }
    .second .mid { text-align: center; padding-top: 8px; line-height: 24px; margin-right: 5px; }
    .second table { width: 727px; margin: -3px 0 0 110px; }
    .second th, .second td { line-height: 24px; height: 37px; }
    .second .tall td, .second .tall th { height: 50px; }
    .second .note { text-align: left; padding-left: 9px; }
    .second .end { border: 0; vertical-align: top; text-align: left; line-height: 26px; padding-left: 2px; }
    .v1 { width: 47px; } .v2 { width: 162px; } .v3 { width: 95px; } .v4 { width: 92px; } .v5 { width: 316px; } .v6 { width: 15px; }
  `];

  private pins(split: boolean) {
    const down = svg`<path d="M.5.5h9v4L5 9 .5 4.500z" fill="#fff" stroke="#888"/>`;
    const up = (o: number) => svg`<path d="M.5 ${o + 9}v-4.500L5 ${o}l4.500 4.500v4.500z" fill="#fff" stroke="#888"/>`;
    const box = (o: number) => svg`<rect x=".5" y=${o + 9} width="9" height="5" fill="#fff" stroke="#888"/>`;
    return html`
      <span class="pin p0"><svg width="10" height="28" viewBox="0 0 10 28">${down}${split ? nothing : svg`${up(12)}${box(12)}`}</svg></span>
      ${split ? html`<span class="pin p1"><svg width="10" height="16" viewBox="0 0 10 16">${up(1)}${box(1)}</svg></span>` : nothing}
      <span class="pin p2"><svg width="10" height="11" viewBox="0 0 10 11">${up(1)}</svg></span>`;
  }

  private lines(parts: string[]) {
    return parts.map((t, i) => html`${t}${i < parts.length - 1 ? html`<br />` : mark(true)}`);
  }

  render() {
    const empty = [1, 2, 3, 4, 5, 6, 7];
    const v = ["4", "3", "2", "1", "", ...Array.from({ length: 25 }, (_, i) => String(i + 1))];
    return html`
      <word-window .data=${leftWord}>
        <div class="canvas">
          <div class="ruler one"><div class="ticks"><div>${rulerLabels(8, 48, 48).map((t) => html`<span>${t}</span>`)}</div></div>${this.pins(false)}</div>
          <article class="page first">
            <div class="marks"><i class="ml"></i><i></i><i class="mr"></i></div>
            <h1>格式 9${mark(true)}</h1>
            <section class="frame">
              <h2>价格明细表${mark(true)}</h2>
              <div class="pair"><span>包号：</span><span>报价单位： ${mark(true)}</span></div>
            </section>
            <table>
              <colgroup><col class="w1" /><col class="w2" /><col class="w3" /><col class="w4" /><col class="w5" /></colgroup>
              <tr>${["序号", "服务名称", "单价", "总价", "备注"].map((t) => html`<th>${t}${mark(true)}</th>`)}</tr>
              ${empty.map(() => html`<tr>${[1, 2, 3, 4, 5].map(() => html`<td>${mark()}</td>`)}</tr>`)}
              <tr><td colspan="2">总价${mark(true)}</td><td colspan="3">${mark()}</td></tr>
            </table>
            <div class="notes">
              <p class="n0">${mark()}</p>
              <p class="n1">注：1. 此表中，总价应和报价一览表的响应总价相一致。${mark()}</p>
              <p class="n2">2. 本表可根据实际情况进行拓展。${mark()}</p>
              <p class="n3">${mark()}</p><p class="n4">${mark()}</p>
              <p class="n5">供应商名称(加盖单位公章)：<span class="blank"></span>${mark()}</p>
            </div>
          </article>
        </div>
      </word-window>
      <div class="wall"></div>
      <note-pad></note-pad>
      <div class="last">
        <word-window maximized .data=${rightWord}>
          <div class="vruler" slot="vruler"><div class="vcell">${v.map((t) => html`<span><b>${t}</b></span>`)}</div></div>
          <div class="canvas">
            <div class="ruler two"><div class="ticks"><div>${rulerLabels(6, 50, 48).map((t) => html`<span>${t}</span>`)}</div></div>${this.pins(true)}</div>
            <div class="page prev"></div>
            <article class="page second">
              <div class="marks"><i class="ml"></i><div class="head"><span><span class="wavy">盘锦鼎信商业</span>学校</span><span>投标文件${mark(true)}</span></div><i class="mr"></i></div>
              <h1><i class="sq"></i><span>4 价格明细表${mark(true)}</span></h1>
              <section class="frame">
                <div class="pair"><span>包号：004</span><span>报价单位：元${mark(true)}</span></div>
                <div class="mid">价格明细表（70人）${mark(true)}</div>
              </section>
              <table>
                <colgroup><col class="v1" /><col class="v2" /><col class="v3" /><col class="v4" /><col class="v5" /><col class="v6" /></colgroup>
                <tr class="tall"><th>序<br />号${mark(true)}</th>${["服务名称", "单价", "总价", "备注"].map((t) => html`<th>${t}${mark(true)}</th>`)}<td class="end">${mark()}</td></tr>
                ${prices.map((p) => html`<tr class=${classMap({ tall: p.note.length > 1 || p.unit.length > 1 || p.name.length > 1 })}>
                  <td>${p.no}${p.no ? mark(true) : nothing}</td><td>${this.lines(p.name)}</td><td>${this.lines(p.unit)}</td>
                  <td>${p.total}${mark(true)}</td><td class="note">${this.lines(p.note)}</td><td class="end">${mark()}</td></tr>`)}
              </table>
            </article>
          </div>
        </word-window>
      </div>
      <div class="task"></div>`;
  }
}
